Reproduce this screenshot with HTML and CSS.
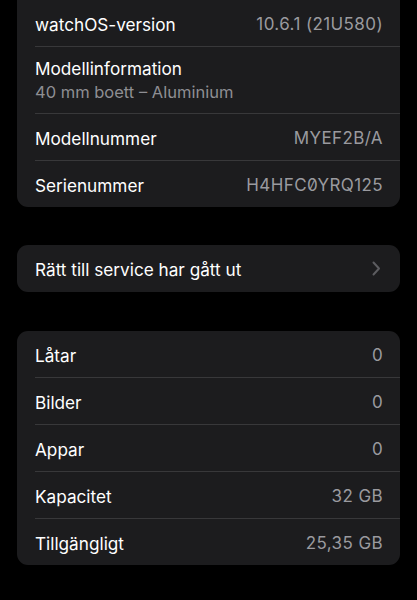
FILE: index.html
```html
<!DOCTYPE html>
<html lang="sv">
<head>
    <meta charset="UTF-8">
    <meta name="viewport" content="width=device-width, initial-scale=1.0">
    <title>Om</title>
    <link rel="stylesheet" href="styles.css">
</head>
<body>
    <div class="page">
        <div class="card card-top">
            <div class="row">
                <span class="label">watchOS-version</span>
                <span class="value">10.6.1 (21U580)</span>
            </div>
            <div class="row row-tall">
                <div class="stack">
                    <span class="label">Modellinformation</span>
                    <span class="sub">40 mm boett – Aluminium</span>
                </div>
            </div>
            <div class="row">
                <span class="label">Modellnummer</span>
                <span class="value">MYEF2B/A</span>
            </div>
            <div class="row">
                <span class="label">Serienummer</span>
                <span class="value serial">H4HFC0YRQ125</span>
            </div>
        </div>

        <div class="card">
            <div class="row row-link">
                <span class="label">Rätt till service har gått ut</span>
                <svg class="chevron" width="9" height="15" viewBox="0 0 9 15">
                    <path d="M1.5 1.5 L7 7.5 L1.5 13.5" fill="none" stroke="#5c5c60" stroke-width="2" stroke-linecap="round" stroke-linejoin="round"/>
                </svg>
            </div>
        </div>

        <div class="card card-last">
            <div class="row">
                <span class="label">Låtar</span>
                <span class="value">0</span>
            </div>
            <div class="row">
                <span class="label">Bilder</span>
                <span class="value">0</span>
            </div>
            <div class="row">
                <span class="label">Appar</span>
                <span class="value">0</span>
            </div>
            <div class="row">
                <span class="label">Kapacitet</span>
                <span class="value">32 GB</span>
            </div>
            <div class="row">
                <span class="label">Tillgängligt</span>
                <span class="value">25,35 GB</span>
            </div>
        </div>
    </div>
</body>
</html>
```

FILE: styles.css
```css
body { margin: 0; background-color: #000; font-family: Inter, "Noto Sans", sans-serif; color: #fff; -webkit-font-smoothing: antialiased; }
.page { padding: 0 17px; display: flex; flex-direction: column; }
.card { background-color: #1c1c1e; border-radius: 11px; margin-top: 38px; }
.card-top { margin-top: 0; border-top-left-radius: 0; border-top-right-radius: 0; }
.card-last { margin-top: 39px; }
.row { height: 46px; box-sizing: content-box; margin-left: 18px; padding-right: 17px; display: flex; align-items: center; justify-content: space-between; border-bottom: 1px solid #38383a; }
.row:last-child { border-bottom: none; }
.label, .value { position: relative; top: 1px; }
.row-tall { height: 66px; }
.row-tall .label { top: 0; }
.row-link { height: 47px; padding-right: 19px; }
.label { font-size: 17.2px; }
.value { font-size: 17px; color: #9a9a9f; letter-spacing: 0.4px; }
.serial { font-feature-settings: "zero" 1; }
.stack { display: flex; flex-direction: column; gap: 3px; }
.sub { font-size: 16.5px; color: #8e8e93; }
.chevron { display: block; }
```
